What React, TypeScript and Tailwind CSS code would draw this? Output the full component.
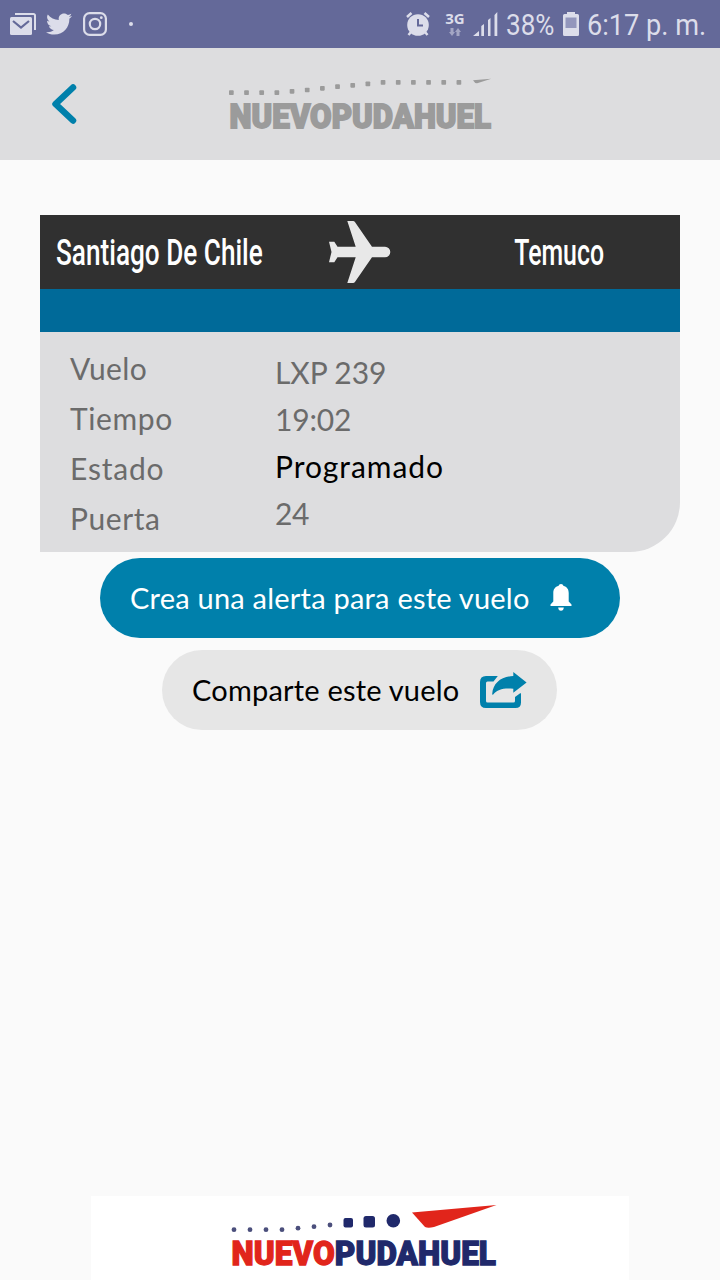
import { FaTwitter } from 'react-icons/fa'

const DETAILS = [
  { label: 'Vuelo', value: 'LXP 239', labelClass: 'tracking-[0.3px]', valueClass: 'tracking-[-0.1px]' },
  { label: 'Tiempo', value: '19:02', labelClass: 'tracking-[0.6px]', valueClass: 'tracking-[-0.2px]' },
  { label: 'Estado', value: 'Programado', labelClass: 'tracking-[0.8px]', valueClass: 'text-black tracking-[0.95px]' },
  { label: 'Puerta', value: '24', labelClass: 'tracking-[0.6px]', valueClass: 'tracking-[-0.3px]' },
]

const HEADER_DOTS = [32.7, 32.7, 32.7, 32.7, 31.3, 30, 28.3, 26.7, 25.3, 23.9, 22.4, 22.4, 22.4, 22.4, 22.4, 22.4]
const FOOTER_DOTS = [33.7, 33.7, 33.7, 33.7, 32.2, 30.7, 29]

function MailIcon() {
  return (
    <svg className="h-6 w-[26px]" viewBox="0 0 26 24" fill="none">
      <path d="M5 2h18.500a1.500 1.500 0 0 1 1.500 1.500V18" stroke="#dcddea" strokeWidth="2" />
      <rect y="5" width="22" height="18" rx="1.500" fill="#dcddea" />
      <path d="M3 9l8 6.500L19 9" stroke="#646999" strokeWidth="2.200" />
    </svg>
  )
}

function InstagramIcon() {
  return (
    <svg className="h-6 w-6" viewBox="0 0 24 24" fill="none" stroke="#dcddea" strokeWidth="2.200">
      <rect x="1.100" y="1.100" width="21.800" height="21.800" rx="5.500" />
      <circle cx="12" cy="12" r="5.200" />
      <circle cx="18.300" cy="5.700" r="1.400" fill="#dcddea" stroke="none" />
    </svg>
  )
}

function AlarmIcon() {
  return (
    <svg className="h-6 w-6" viewBox="0 0 24 24" fill="none" stroke="#dcddea">
      <circle cx="12" cy="13" r="10.800" fill="#dcddea" stroke="none" />
      <path d="M1 5l4.500-4M23 5l-4.500-4" strokeWidth="2.500" />
      <path d="M5 20l-2.500 3M19 20l2.500 3" strokeWidth="2.500" />
      <path d="M12 7v6.500h5" stroke="#646999" strokeWidth="2" />
    </svg>
  )
}

function DataIcon() {
  return (
    <svg className="h-2 w-[14px]" viewBox="0 0 14 8" fill="#a3a6c4">
      <path d="M2.500 0h3v4h1.500L4 8 1 4h1.500zM8.500 8h3V4H13l-3-4-3 4h1.500z" />
    </svg>
  )
}

function SignalIcon() {
  return (
    <svg className="h-6 w-[25px]" viewBox="0 0 25 24" fill="#dcddea">
      <path d="M0 24l6-5v5zM8.300 14l2.700-2v12H8.300zM15 8l2.500-2v18H15zM21.500 3L24.300 0v24h-2.800z" />
    </svg>
  )
}

function BatteryIcon() {
  return (
    <svg className="h-6 w-4" viewBox="0 0 16 24">
      <path d="M4 0h8v2h2.500a1.500 1.500 0 0 1 1.500 1.500v19a1.500 1.500 0 0 1-1.500 1.500h-13A1.500 1.500 0 0 1 0 22.500v-19A1.500 1.500 0 0 1 1.500 2H4z" fill="#dcddea" />
      <path d="M2.500 5.500h11V16h-11z" fill="#9396bc" />
    </svg>
  )
}

function PlaneIcon() {
  return (
    <svg className="h-[62px] w-[62px]" viewBox="0 0 62 62" fill="#e8e8e8">
      <path d="M18.300 0H24q1.300 0 2.100 1.200L43 25.700h13a5.300 5.300 0 0 1 0 10.600H43L26.100 60.800Q25.300 62 24 62h-5.700l8.400-25.700H8.500l-3.200 5H0L2.500 31 0 20.700h5.300l3.200 5h18.200z" />
    </svg>
  )
}

function BellIcon() {
  return (
    <svg className="mb-px h-[27px] w-[22px]" viewBox="0 0 22 27" fill="#fff">
      <path d="M11 0c1.300 0 2.100.8 2.300 1.800C17 2.700 18.700 5.500 18.700 9v8.500L21.500 20.500V22H.5v-1.500l2.800-3V9c0-3.500 1.700-6.300 5.400-7.200C8.900.8 9.700 0 11 0zM8.200 23.500h5.600c0 2-1.200 3.300-2.800 3.300s-2.800-1.300-2.800-3.300z" />
    </svg>
  )
}

function ShareIcon() {
  return (
    <svg className="h-9 w-[47px]" viewBox="0 0 47 36" fill="none">
      <path d="M17.800 4L13.500 9.500H7.500q-1.500 0-1.500 1.500v18q0 1.500 1.500 1.500h26q1.500 0 1.500-1.500v-4l5.500-4q.5.300.5 1.500V30.500q0 5.500-5.500 5.500H6q-6 0-6-6V10q0-6 6-6z" fill="#0080ab" />
      <path d="M33.300 0L46.600 10.400 33.300 20.800V16.800C23 16 17.500 17.500 13.200 22.500q-1 .6-1-.6C13 11 21 4.500 33.300 4z" fill="#0080ab" />
    </svg>
  )
}

function HeaderLogo() {
  return (
    <svg className="h-[72px] w-[330px] overflow-visible" viewBox="-3 0 330 72" fill="#9b9b9b">
      {HEADER_DOTS.map((y, i) => (
        <rect key={i} x={i * 15.17} y={y - 14.350} width="4.700" height="4.700" rx="0.800" />
      ))}
      <path d="M244 8.300l18.200-1.500-14 4.500q-2.200.3-4.200-3z" />
      <text
        x="0.500"
        y="56.200"
        textLength="261.500"
        lengthAdjust="spacingAndGlyphs"
        stroke="#9b9b9b"
        strokeWidth="1.800"
        className="font-['Roboto',sans-serif] text-[34px] font-black"
      >
        NUEVOPUDAHUEL
      </text>
    </svg>
  )
}

function FooterLogo() {
  return (
    <svg className="h-[84px] w-[330px] overflow-visible" viewBox="-3 0 330 84" fill="#20296b">
      {FOOTER_DOTS.map((y, i) => (
        <circle key={i} cx={3 + i * 16} cy={y} r="2.400" fill="#4b4f7c" />
      ))}
      <rect x="112.500" y="22" width="9.500" height="9.500" rx="2" />
      <rect x="132.500" y="20" width="11.500" height="11.500" rx="2.500" />
      <circle cx="162.300" cy="24.700" r="6.800" />
      <path d="M181 16.500L265.500 9 203 31q-6 1.500-9 0z" fill="#e1251b" />
      <text
        x="0.500"
        y="69"
        textLength="264.500"
        lengthAdjust="spacingAndGlyphs"
        strokeWidth="1.300"
        className="font-['Roboto',sans-serif] text-[33.5px] font-black"
      >
        <tspan fill="#e1251b" stroke="#e1251b">NUEVO</tspan>
        <tspan fill="#20296b" stroke="#20296b">PUDAHUEL</tspan>
      </text>
    </svg>
  )
}

function StatusBar() {
  return (
    <div className="flex h-12 items-center bg-[#646999] pl-[10px] font-['Roboto',sans-serif] text-[30px] leading-[48px] whitespace-nowrap text-[#dcddea]">
      <MailIcon />
      <FaTwitter className="ml-[10px] h-[26px] w-[26px]" />
      <span className="ml-[11px]">
        <InstagramIcon />
      </span>
      <span className="ml-[22px] h-1 w-1 rounded-full bg-[#dcddea]" />
      <span className="ml-[273px]">
        <AlarmIcon />
      </span>
      <div className="ml-[15px] flex w-[20px] flex-col items-center gap-[3px]">
        <span className="font-['Open_Sans',sans-serif] text-[15px] leading-[13px] font-bold">3G</span>
        <DataIcon />
      </div>
      <span className="ml-[8px]">
        <SignalIcon />
      </span>
      <span className="ml-[8px] w-[57px] pt-0.5">
        <span className="inline-block origin-left scale-x-[0.87]">38%</span>
      </span>
      <BatteryIcon />
      <span className="ml-[8px] w-[120px] pt-0.5">
        <span className="inline-block origin-left scale-x-[0.905]">6:17 p. m.</span>
      </span>
    </div>
  )
}

export default function App() {
  return (
    <div className="flex h-[1280px] w-[720px] flex-col overflow-hidden bg-[#fafafa] font-['Lato',sans-serif]">
      <StatusBar />

      <header className="flex h-28 items-start bg-[#dddddf] pl-[51px]">
        <button type="button" aria-label="Volver" className="mt-[35px]">
          <svg className="h-[42px] w-[26px]" viewBox="0 0 26 42" fill="none">
            <path d="M22 4.500L4.500 21 22 37.500" stroke="#0080ab" strokeWidth="6.500" strokeLinecap="round" strokeLinejoin="round" />
          </svg>
        </button>
        <div className="mt-6 ml-[149px]">
          <HeaderLogo />
        </div>
      </header>

      <main className="flex flex-1 flex-col items-center pt-[55px]">
        <section className="w-[640px] overflow-hidden rounded-br-[50px] bg-[#dddddf]">
          <div className="flex h-[74px] items-center bg-[#303030] font-['Roboto',sans-serif] text-[36px] font-medium whitespace-nowrap text-white">
            <div className="w-[289px] pt-0.5 pl-4">
              <span className="inline-block origin-left scale-x-[0.727]">Santiago De Chile</span>
            </div>
            <PlaneIcon />
            <div className="flex flex-1 justify-center pt-0.5 pl-[48px]">
              <span className="inline-block scale-x-[0.69]">Temuco</span>
            </div>
          </div>
          <div className="h-[43px] bg-[#006a99]" />

          <div className="flex h-[220px] pl-[30px] text-[30px] text-[#6b6b6b]">
            <div className="w-[205px] pt-[11px]">
              {DETAILS.map((d) => (
                <div key={d.label} className={`h-[50px] leading-[50px] ${d.labelClass}`}>
                  {d.label}
                </div>
              ))}
            </div>
            <div className="pt-[17px]">
              {DETAILS.map((d) => (
                <div key={d.label} className={`h-[47px] leading-[47px] ${d.valueClass}`}>
                  {d.value}
                </div>
              ))}
            </div>
          </div>
        </section>

        <button
          type="button"
          className="mt-[6px] flex h-20 w-[520px] items-center rounded-full bg-[#0080ab] pl-[30px] text-[29px] whitespace-nowrap text-white"
        >
          <span className="w-[420px] text-left tracking-[0.22px]">Crea una alerta para este vuelo</span>
          <BellIcon />
        </button>

        <button
          type="button"
          className="mt-3 mr-px flex h-20 w-[395px] items-center rounded-full bg-[#e6e6e6] pl-[30px] text-[29px] whitespace-nowrap text-black"
        >
          <span className="w-[288px] text-left tracking-[0.2px]">Comparte este vuelo</span>
          <ShareIcon />
        </button>
      </main>

      <footer className="mx-auto h-[84px] w-[538px] bg-white pl-[137px]">
        <FooterLogo />
      </footer>
    </div>
  )
}
